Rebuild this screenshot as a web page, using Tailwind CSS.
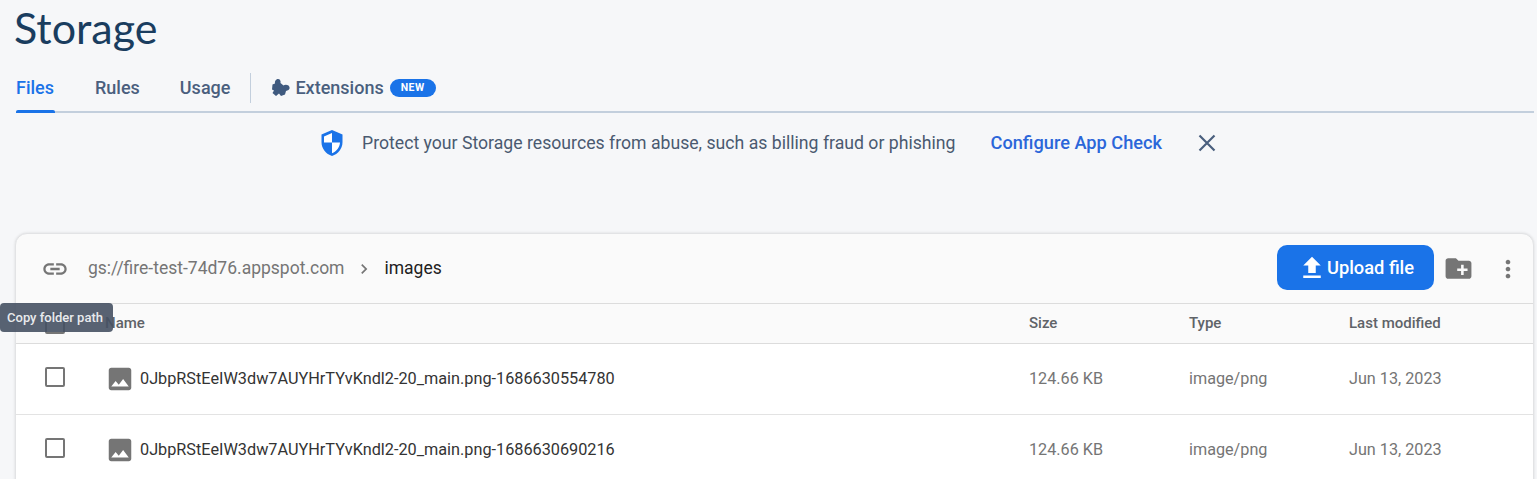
<!DOCTYPE html>
<html lang="en">
<head>
  <meta charset="UTF-8" />
  <title>Storage</title>
  <script src="https://cdn.jsdelivr.net/npm/@tailwindcss/browser@4"></script>
</head>
<body class="bg-[#f6f7f9] font-['Roboto',sans-serif] h-[479px] overflow-hidden relative">
  <h1 class="h-[63px] pl-[14px] pt-[3px] text-[43px] leading-[50px] text-[#1a3d5f] font-['Lato',sans-serif]">Storage</h1>

  <!-- tabs -->
  <div class="ml-[16px] mr-[3px] h-[50px] pt-[1px] border-b-2 border-[#c3cfdd] flex items-center text-[18px] font-medium text-[#4a5f7e]">
    <div class="relative h-[47px] w-[39px] flex items-center text-[#1a73e8]">Files
      <div class="absolute left-0 right-0 -bottom-[2px] h-[3px] bg-[#1a73e8] rounded-t-[2px]"></div>
    </div>
    <div class="ml-[40px]">Rules</div>
    <div class="ml-[40px]">Usage</div>
    <div class="ml-[20px] w-px h-[30px] bg-[#c3cfdd]"></div>
    <svg class="ml-[20px] w-[20px] h-[20px]" viewBox="6 6 20 20" fill="#3f5a7f"><path d="M7.500 12.500 10 11.500C9.500 8.500 11.500 7 13 7 15 7 16 9 15.500 11L18.500 13.500C19.500 12.500 22 12.500 23.500 13.500 25 15 25 17 23.500 18L21 19 20 22.500 16 24 14 21.500 11 24 7.500 21 9 18.500 7 17.500Z"/></svg>
    <div class="ml-[4px]">Extensions</div>
    <div class="ml-[6px] h-[18px] w-[46px] rounded-full bg-[#1a73e8] text-white text-[10.5px] font-bold tracking-[0.5px] flex items-center justify-center">NEW</div>
  </div>

  <!-- app check banner -->
  <div class="h-[60px] flex items-center pl-[320px] text-[17.67px] text-[#4a5a70]">
    <svg class="w-[24px] h-[28px]" viewBox="0 0 24 28"><path d="M12 1 1.500 5.500V13c0 6.500 4.400 12 10.500 14 6.100-2 10.500-7.500 10.500-14V5.500z" fill="#1a73e8"/><path d="M12 4 4 7.500V13.500h8zM12 13.500v10.700c4.600-1.700 7.700-5.800 8-10.700z" fill="#fff"/></svg>
    <span class="ml-[18px]">Protect your Storage resources from abuse, such as billing fraud or phishing</span>
    <span class="ml-[35px] text-[18.2px] font-medium text-[#2b66d9]">Configure App Check</span>
    <svg class="ml-[33px] w-[24px] h-[24px]" viewBox="0 0 24 24" fill="none" stroke="#4a5f7e" stroke-width="2.200"><path d="M4.500 4.500l15 15M19.500 4.500l-15 15"/></svg>
  </div>

  <!-- file browser -->
  <div class="mt-[60px] ml-[15px] mr-[3px] bg-[#fafafa] border border-[#e2e3e5] rounded-t-[12px] shadow-[0_0_3px_rgba(0,0,0,0.12)] text-[#5f6368]">
    <div class="h-[70px] flex items-center border-b border-[#dcdcdc]">
      <svg class="ml-[25px] w-[28px] h-[28px]" viewBox="0 0 24 24" fill="#757575"><path d="M3.900 12c0-1.710 1.390-3.100 3.100-3.100h4V7H7c-2.760 0-5 2.240-5 5s2.240 5 5 5h4v-1.900H7c-1.710 0-3.100-1.390-3.100-3.100zM8 13h8v-2H8v2zm9-6h-4v1.900h4c1.710 0 3.100 1.390 3.100 3.100s-1.390 3.100-3.100 3.100h-4V17h4c2.760 0 5-2.240 5-5s-2.240-5-5-5z"/></svg>
      <span class="ml-[19px] text-[17.5px] text-[#757575]">gs://fire-test-74d76.appspot.com</span>
      <svg class="ml-[10px] w-[20px] h-[20px]" viewBox="0 0 24 24" fill="#757575"><path d="M10 6 8.590 7.410 13.170 12l-4.580 4.590L10 18l6-6z"/></svg>
      <span class="ml-[10px] text-[17.5px] text-[#212121]">images</span>
      <button class="ml-auto mb-[2px] w-[157px] h-[45px] rounded-[10px] bg-[#1a73e8] text-white text-[18.300px] font-medium flex items-center justify-center">
        <svg class="w-[30px] h-[30px]" viewBox="0 0 24 24" fill="#fff"><path d="M9 16h6v-6h4l-7-7-7 7h4zm-4 2h14v2H5z"/></svg>
        Upload file
      </button>
      <svg class="ml-[9px] w-[31px] h-[31px]" viewBox="0 0 24 24" fill="#757575"><path d="M20 6h-8l-2-2H4c-1.110 0-2 .890-2 2v12c0 1.110.890 2 2 2h16c1.110 0 2-.890 2-2V8c0-1.110-.890-2-2-2zm-1 8h-3v3h-2v-3h-3v-2h3V9h2v3h3v2z"/></svg>
      <svg class="ml-[20px] mr-[11px] w-[28px] h-[28px]" viewBox="0 0 24 24" fill="#757575"><path d="M12 8c1.100 0 2-.900 2-2s-.900-2-2-2-2 .900-2 2 .900 2 2 2zm0 2c-1.100 0-2 .900-2 2s.900 2 2 2 2-.900 2-2-.900-2-2-2zm0 6c-1.100 0-2 .900-2 2s.900 2 2 2 2-.900 2-2-.900-2-2-2z"/></svg>
    </div>
    <div class="h-[40px] grid grid-cols-[1013px_160px_160px_1fr] items-center border-b border-[#dcdcdc] text-[15px] font-medium">
      <div class="flex items-center">
        <div class="ml-[29px] w-[20px] h-[20px] border-2 border-[#757575] rounded-[2px]"></div>
        <span class="ml-[40px]">Name</span>
      </div>
      <div>Size</div><div>Type</div><div>Last modified</div>
    </div>
    <div class="bg-white">
      <div class="h-[71px] grid grid-cols-[1013px_160px_160px_1fr] items-center border-b border-[#e3e3e3] text-[16.2px] text-[#757575]">
        <div class="flex items-center">
          <div class="ml-[29px] mb-[4px] w-[20px] h-[20px] border-2 border-[#757575] rounded-[2px]"></div>
          <svg class="ml-[40px] w-[30px] h-[30px]" viewBox="0 0 24 24" fill="#757575"><path d="M21 19V5c0-1.100-.900-2-2-2H5c-1.100 0-2 .900-2 2v14c0 1.100.900 2 2 2h14c1.100 0 2-.900 2-2zM8.500 13.500l2.500 3.010L14.500 12l4.500 6H5l3.500-4.500z"/></svg>
          <span class="ml-[5px] text-[16.25px] text-[#333]">0JbpRStEeIW3dw7AUYHrTYvKndl2-20_main.png-1686630554780</span>
        </div>
        <div>124.66 KB</div><div>image/png</div><div>Jun 13, 2023</div>
      </div>
      <div class="h-[71px] grid grid-cols-[1013px_160px_160px_1fr] items-center border-b border-[#e3e3e3] text-[16.2px] text-[#757575]">
        <div class="flex items-center">
          <div class="ml-[29px] mb-[4px] w-[20px] h-[20px] border-2 border-[#757575] rounded-[2px]"></div>
          <svg class="ml-[40px] w-[30px] h-[30px]" viewBox="0 0 24 24" fill="#757575"><path d="M21 19V5c0-1.100-.900-2-2-2H5c-1.100 0-2 .900-2 2v14c0 1.100.900 2 2 2h14c1.100 0 2-.900 2-2zM8.500 13.500l2.500 3.010L14.500 12l4.500 6H5l3.500-4.500z"/></svg>
          <span class="ml-[5px] text-[16.25px] text-[#333]">0JbpRStEeIW3dw7AUYHrTYvKndl2-20_main.png-1686630690216</span>
        </div>
        <div>124.66 KB</div><div>image/png</div><div>Jun 13, 2023</div>
      </div>
    </div>
  </div>

  <!-- tooltip -->
  <div class="absolute left-0 top-[303px] w-[113px] h-[29px] pr-[3px] rounded-[4px] bg-[#465163]/90 text-[#e8eaed] text-[13px] font-medium flex items-center justify-center">Copy folder path</div>
</body>
</html>
